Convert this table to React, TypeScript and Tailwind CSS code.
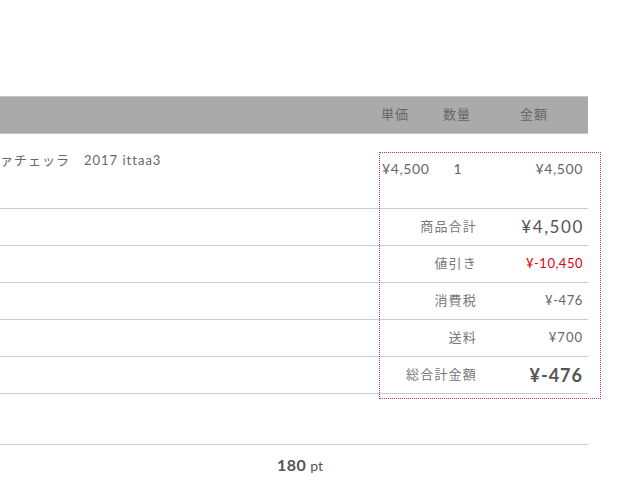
const font = { fontFamily: 'Lato, "Noto Sans CJK JP", sans-serif' };

const rows = [
  { label: '商品合計', value: '¥4,500', cls: 'text-[17px] text-[#555] tracking-[1.6px] pr-[4px]' },
  { label: '値引き', value: '¥-10,450', cls: 'text-[13px] text-[#e00012] tracking-[0.5px] pr-[5px]' },
  { label: '消費税', value: '¥-476', cls: 'text-[13px] text-[#666] tracking-[0.6px] pr-[5px]' },
  { label: '送料', value: '¥700', cls: 'text-[13px] text-[#666] tracking-[1px] pr-[5px]' },
  { label: '総合計金額', value: '¥-476', cls: 'text-[18px] font-bold text-[#555] tracking-[1px] pr-[5px]' },
];

export default function App() {
  return (
    <div className="relative w-[640px] h-[480px] bg-white overflow-hidden text-[#666]" style={font}>
      <div className="w-[588px] pt-[96px]">
        {/* header */}
        <div className="flex h-[38px] items-center bg-[#aaaaaa] border-y border-[#c6c6c6] text-[13px] text-[#666] tracking-[1px]">
          <div className="flex-1" />
          <div className="w-[63px] pl-[1px]">単価</div>
          <div className="w-[28px] text-center whitespace-nowrap">数量</div>
          <div className="w-[117px] pl-[49px]">金額</div>
        </div>

        {/* item */}
        <div className="flex h-[75px] border-b border-[#cccccc] text-[14px]">
          <div className="flex-1 pt-[17px] text-[13px] tracking-[1px] whitespace-nowrap">ァチェッラ　2017 ittaa3</div>
          <div className="w-[63px] pl-[2px] pt-[24px] tracking-[0.6px]">¥4,500</div>
          <div className="w-[28px] pt-[24px] pl-[1px] text-center">1</div>
          <div className="w-[117px] pt-[24px] pr-[5px] text-right tracking-[0.6px]">¥4,500</div>
        </div>

        {rows.map((r) => (
          <div key={r.label} className="flex h-[37px] items-center border-b border-[#cccccc]">
            <div className="flex-1 text-right text-[13px] tracking-[1.2px] text-[#777]">{r.label}</div>
            <div className={`w-[111px] text-right ${r.cls}`}>{r.value}</div>
          </div>
        ))}

        <div className="h-[51px] border-b border-[#cccccc]" />

        <div className="pt-[8px] pl-[277px] text-[#555] whitespace-nowrap">
          <span className="text-[16px] font-bold tracking-[0.5px]">180</span>
          <span className="text-[14px] ml-[4px]">pt</span>
        </div>
      </div>

      {/* dotted outline overlay */}
      <div className="absolute left-[379px] top-[152px] w-[222px] h-[247px] border border-dotted border-[#c2307c] pointer-events-none" />
    </div>
  );
}
